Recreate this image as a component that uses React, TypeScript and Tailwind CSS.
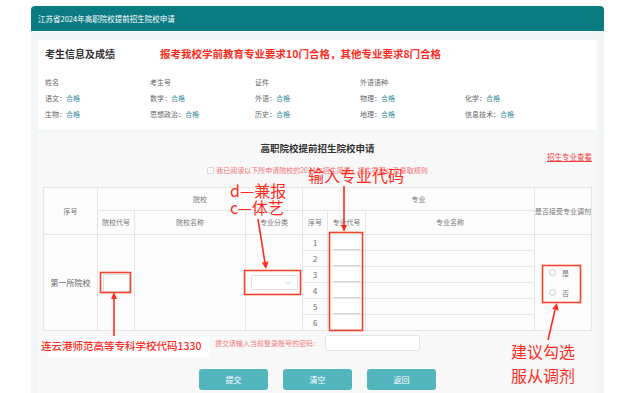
import React from "react";

const RED = "text-[#ff2d1f]";

function InfoCell({ label, value }: { label: string; value: string }) {
  return (
    <div className="text-[7px] leading-[16px] text-[#666] whitespace-nowrap">
      {label}
      {value ? (
        <>
          ：<span className="text-[#3a8fa0]">{value}</span>
        </>
      ) : null}
    </div>
  );
}

export default function App() {
  const rows: ([string, string] | null)[][] = [
    [["姓名", ""], ["考生号", ""], ["证件", ""], ["外语语种", ""], null],
    [["语文", "合格"], ["数学", "合格"], ["外语", "合格"], ["物理", "合格"], ["化学", "合格"]],
    [["生物", "合格"], ["思想政治", "合格"], ["历史", "合格"], ["地理", "合格"], ["信息技术", "合格"]],
  ];
  const nums = [1, 2, 3, 4, 5, 6];
  const th = "border border-[#e6e6e6] text-[7px] font-normal text-[#777] text-center align-middle whitespace-nowrap";
  const td = "border border-[#e6e6e6] text-center align-middle";

  return (
    <div className="relative w-[638px] h-[393px] overflow-hidden bg-white font-['Noto_Sans_CJK_SC',sans-serif]">
      <div className="ml-[31px] mt-[6px] w-[573px]">
        <div className="h-[25px] rounded-t-[4px] bg-[#0b7b82] px-[7px] flex items-center text-[7.5px] text-white">
          江苏省2024年高职院校提前招生院校申请
        </div>
        <div className="bg-[#f3f6f7] px-[7px] pt-[9px] h-[362px]">
          {/* info card */}
          <div className="bg-white h-[90px] px-[7px] pt-[7px]">
            <div className="flex items-center h-[13px]">
              <span className="w-[115px] text-[10px] font-bold text-[#333] whitespace-nowrap">考生信息及成绩</span>
              <span className={`text-[10.5px] font-bold ${RED} whitespace-nowrap`}>
                报考我校学前教育专业要求10门合格，其他专业要求8门合格
              </span>
            </div>
            <div className="mt-[14px] grid grid-cols-[105px_105px_105px_105px_105px]">
              {rows.map((r, i) =>
                r.map((c, j) =>
                  c ? <InfoCell key={`${i}-${j}`} label={c[0]} value={c[1]} /> : <div key={`${i}-${j}`} />
                )
              )}
            </div>
          </div>

          {/* application section */}
          <div className="mt-[3px] bg-[#f8f8f8] h-[260px] px-[5px] pt-[7px]">
            <div className="grid grid-cols-[1fr_auto_1fr] items-start">
              <div />
              <div className="text-[9.5px] leading-[16px] font-bold text-[#333] whitespace-nowrap">高职院校提前招生院校申请</div>
              <div className="justify-self-end mt-[12px] text-[7.5px] leading-[9px] text-[#f03c3c] underline whitespace-nowrap">
                招生专业查看
              </div>
            </div>
            <div className="mt-[4px] h-[10px] flex items-center justify-center gap-[2px]">
              <span className="w-[7px] h-[7px] border border-[#d8d8d8] bg-white rounded-[1px]" />
              <span className="text-[7px] text-[#f37272] whitespace-nowrap">
                我已阅读以下所申请院校的2024年招生简章，招生章程以及录取规则
              </span>
            </div>

            <table className="mt-[12px] w-[548px] table-fixed border-collapse bg-[#fcfcfc]">
              <colgroup>
                <col className="w-[54px]" />
                <col className="w-[37px]" />
                <col className="w-[111px]" />
                <col className="w-[57px]" />
                <col className="w-[25px]" />
                <col className="w-[38px]" />
                <col className="w-[169px]" />
                <col className="w-[57px]" />
              </colgroup>
              <thead>
                <tr className="h-[23px]">
                  <th rowSpan={2} className={th}>序号</th>
                  <th colSpan={3} className={th}>院校</th>
                  <th colSpan={3} className={th}>专业</th>
                  <th rowSpan={2} className={`${th} text-[6.5px]`}>是否接受专业调剂</th>
                </tr>
                <tr className="h-[24px]">
                  <th className={th}>院校代号</th>
                  <th className={th}>院校名称</th>
                  <th className={th}>专业分类</th>
                  <th className={th}>序号</th>
                  <th className={th}>专业代号</th>
                  <th className={th}>专业名称</th>
                </tr>
              </thead>
              <tbody>
                {nums.map((n) => (
                  <tr key={n} className="h-[16px]">
                    {n === 1 && (
                      <>
                        <td rowSpan={6} className={`${td} text-[8px] text-[#666]`}>第一所院校</td>
                        <td rowSpan={6} className={td}>
                          <div className="mx-auto w-[27px] h-[18px] bg-white border border-[#e0e0e0]" />
                        </td>
                        <td rowSpan={6} className={td} />
                        <td rowSpan={6} className={td}>
                          <div className="mx-auto w-[47px] h-[15px] bg-white border border-[#e2e2e2] rounded-[2px] flex items-center justify-end pr-[6px]">
                            <svg width="6" height="4" viewBox="0 0 6 4" fill="none">
                              <path d="M0.5 0.5 L3 3 L5.5 0.5" stroke="#c8c8c8" strokeWidth="0.8" />
                            </svg>
                          </div>
                        </td>
                      </>
                    )}
                    <td className={`${td} text-[7.5px] text-[#666]`}>{n}</td>
                    <td className={td}>
                      <div className="mx-auto w-[27px] h-[14px] bg-white border-b-[1.5px] border-[#d6d6d6]" />
                    </td>
                    <td className={td} />
                    {n === 1 && (
                      <td rowSpan={6} className={td}>
                        <div className="flex flex-col gap-[12px] pl-[14px]">
                          <div className="flex items-center gap-[6px]">
                            <span className="w-[7px] h-[7px] rounded-full border border-[#ccc] bg-white" />
                            <span className="text-[7px] leading-[8px] text-[#777]">是</span>
                          </div>
                          <div className="flex items-center gap-[6px]">
                            <span className="w-[7px] h-[7px] rounded-full border border-[#ccc] bg-white" />
                            <span className="text-[7px] leading-[8px] text-[#777]">否</span>
                          </div>
                        </div>
                      </td>
                    )}
                  </tr>
                ))}
              </tbody>
            </table>

            <div className="mt-[4px] flex items-center justify-center gap-[5px]">
              <span className="text-[7px] text-[#f07a7a] whitespace-nowrap">提交请输入当前登录账号的密码：</span>
              <div className="w-[95px] h-[16px] bg-white border border-[#e3e3e3] rounded-[3px]" />
            </div>

            <div className="mt-[18px] flex justify-center gap-[15px]">
              {["提交", "清空", "返回"].map((t) => (
                <div
                  key={t}
                  className="w-[69px] h-[21px] rounded-[3px] bg-[#53b6bd] flex items-center justify-center text-[8px] text-white"
                >
                  {t}
                </div>
              ))}
            </div>
          </div>
        </div>
      </div>

      {/* annotation overlay */}
      <svg className="absolute left-0 top-0" width="638" height="393" viewBox="0 0 638 393" fill="none">
        <g stroke="#f0452d" strokeWidth="1.6">
          <rect x="100.5" y="272.5" width="30" height="20" />
          <rect x="244.5" y="270.5" width="56" height="24" />
          <rect x="329.5" y="232.5" width="33" height="98" />
          <rect x="542.5" y="265.5" width="38" height="37" />
        </g>
        <g stroke="#ff2d1f" strokeWidth="1.6">
          <line x1="258" y1="219" x2="265" y2="263" />
          <line x1="344" y1="186" x2="344" y2="226" />
          <line x1="114" y1="338" x2="114" y2="298" />
          <line x1="548" y1="340" x2="555" y2="310" />
        </g>
        <g fill="#ff2d1f">
          <polygon points="266,269 268.5,261.6 261.8,262.6" />
          <polygon points="344,232 347,225 341,225" />
          <polygon points="114,292 117,299 111,299" />
          <polygon points="557,303 558.6,310.6 552.2,309.1" />
        </g>
      </svg>

      <div className={`absolute left-[230px] top-[182px] text-[16px] leading-[17px] ${RED} whitespace-nowrap`}>
        <div>d—兼报</div>
        <div>c—体艺</div>
      </div>
      <div className={`absolute left-[308px] top-[165px] text-[16px] leading-[20px] ${RED} whitespace-nowrap`}>
        输入专业代码
      </div>
      <div className="absolute left-[48px] top-[336px] w-[161px] h-[22px] bg-white" />
      <div className={`absolute left-[41px] top-[338px] text-[10.5px] leading-[16px] font-medium ${RED} whitespace-nowrap`}>
        连云港师范高等专科学校代码1330
      </div>
      <div className={`absolute left-[511px] top-[339px] text-[16px] leading-[24px] ${RED} whitespace-nowrap`}>
        <div>建议勾选</div>
        <div>服从调剂</div>
      </div>
    </div>
  );
}
